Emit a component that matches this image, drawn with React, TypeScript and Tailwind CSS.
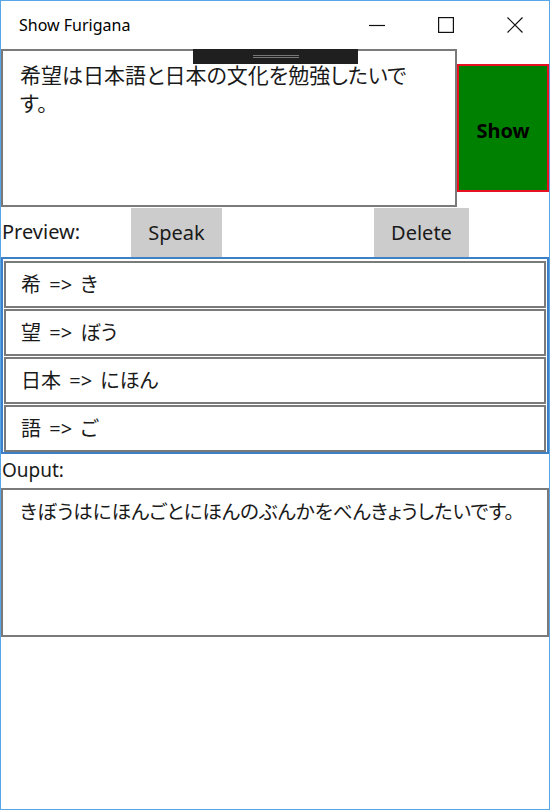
import * as React from "react";

const font = "font-['Noto_Sans','Noto_Sans_CJK_JP',sans-serif] [font-feature-settings:'palt']";

const readings = ["希 => き", "望 => ぼう", "日本 => にほん", "語 => ご"];

const App = () => {
    return (
        <div className={`w-[550px] h-[810px] border border-[#56a6e8] bg-white flex flex-col text-[#1a1a1a] ${font}`}>
            {/* title bar */}
            <div className="h-[48px] flex items-center shrink-0">
                <div className="pl-[18px] text-[16px] text-black">Show Furigana</div>
                <div className="ml-auto flex items-center h-full">
                    <div className="w-[69px] h-full flex items-center justify-center">
                        <svg width="16" height="16" viewBox="0 0 16 16">
                            <path d="M0 8.5h16" stroke="#111" strokeWidth="1.2" />
                        </svg>
                    </div>
                    <div className="w-[69px] h-full flex items-center justify-center">
                        <svg width="16" height="16" viewBox="0 0 16 16">
                            <rect x="0.6" y="0.6" width="14.8" height="14.8" fill="none" stroke="#111" strokeWidth="1.2" />
                        </svg>
                    </div>
                    <div className="w-[69px] h-full flex items-center justify-center">
                        <svg width="16" height="16" viewBox="0 0 16 16">
                            <path d="M0.5 0.5L15.5 15.5M15.5 0.5L0.5 15.5" stroke="#111" strokeWidth="1.2" />
                        </svg>
                    </div>
                </div>
            </div>

            {/* input + show */}
            <div className="relative flex items-center h-[158px] shrink-0">
                <div className="w-[456px] h-full border-2 border-[#7a7a7a] px-[17px] pt-[10px] text-[21px] leading-[28px]">
                    希望は日本語と日本の文化を勉強したいで<br />す。
                </div>
                <button className="w-[92px] h-[128px] pt-[6px] bg-[#008000] border-2 border-[#e81123] text-[20px] font-bold text-black">
                    Show
                </button>
                <div className="absolute left-[192px] top-0 w-[165px] h-[15px] bg-[#1f1f1f] flex flex-col items-center justify-center gap-[1px]">
                    <div className="w-[46px] h-px bg-[#777]" />
                    <div className="w-[46px] h-px bg-[#777]" />
                </div>
            </div>

            {/* preview row */}
            <div className="h-[50px] flex items-center shrink-0 text-[20px]">
                <div className="w-[130px] pl-px">Preview:</div>
                <button className="w-[91px] h-[49px] mt-px bg-[#cccccc]">Speak</button>
                <div className="w-[152px]" />
                <button className="w-[95px] h-[49px] mt-px bg-[#cccccc]">Delete</button>
            </div>

            {/* list */}
            <div className="h-[197px] shrink-0 border-2 border-[#3d80c6] pt-[2px] px-px flex flex-col gap-px">
                {readings.map((r) => (
                    <div key={r} className="h-[47px] border-2 border-[#7a7a7a] flex items-center pl-[15px] text-[20px] [word-spacing:3px]">
                        {r}
                    </div>
                ))}
            </div>

            {/* output */}
            <div className="h-[34px] shrink-0 text-[19px] leading-[26px] pl-px pt-[3px]">Ouput:</div>
            <div className="h-[149px] shrink-0 border-2 border-[#7a7a7a] px-[17px] pt-[8px] text-[19.5px] leading-[28px]">
                きぼうはにほんごとにほんのぶんかをべんきょうしたいです。
            </div>
        </div>
    );
};

export default App;
